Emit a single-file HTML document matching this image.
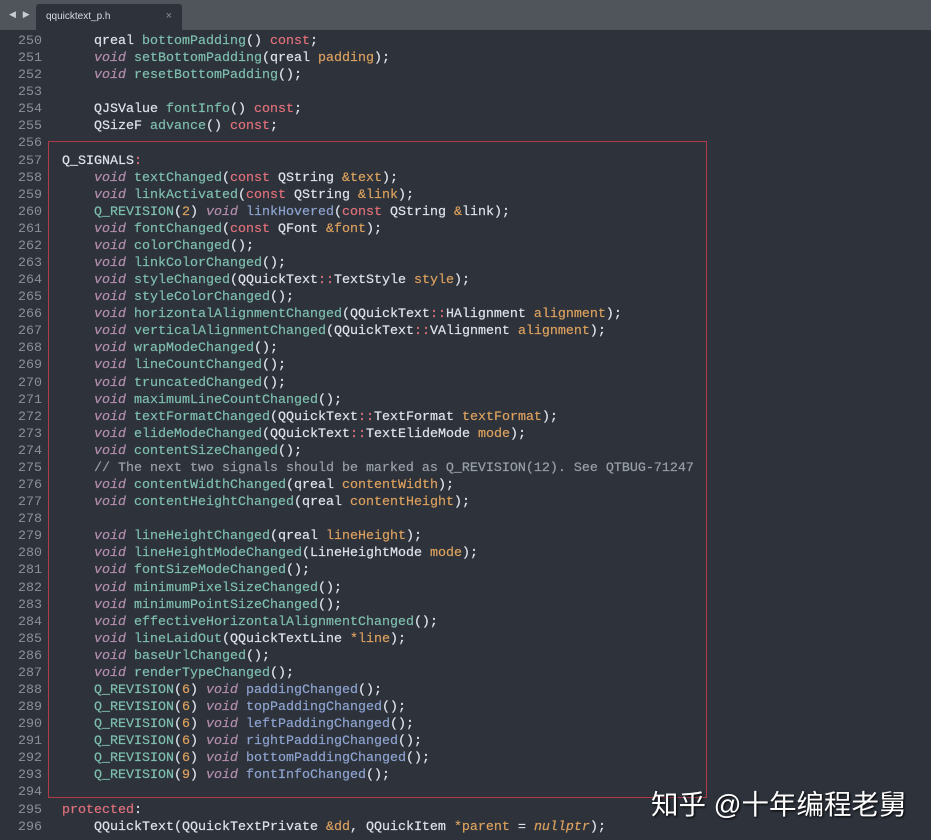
<!DOCTYPE html>
<html><head><meta charset="utf-8"><style>
body{margin:0;width:931px;height:840px;background:#2d323b;overflow:hidden;position:relative;font-family:"Liberation Mono",monospace}
.tabbar{position:absolute;left:0;top:0;width:931px;height:30px;background:#50545b}
.tab{position:absolute;left:36px;top:4px;width:146px;height:26px;background:#2d323b;border-radius:3px 3px 0 0}
.tab span{position:absolute;left:10px;top:7px;font:10px "Liberation Sans",sans-serif;color:#d8dce2}
.tab b{position:absolute;right:10px;top:6px;font:11px "Liberation Sans",sans-serif;color:#8b9099;font-weight:normal}
.arr{position:absolute;left:9px;top:10px;font:9px "DejaVu Sans",sans-serif;color:#c9ccd2;letter-spacing:2px}
.ln{position:absolute;left:0;top:33px;width:42px;text-align:right;font-size:13.33px;line-height:17.08px;color:#8b919a;white-space:pre}
.code{position:absolute;left:62px;top:33px;font-size:13.33px;line-height:17.08px;color:#dfe3ea;white-space:pre;-webkit-text-stroke:0.2px}
.k{color:#b48ead;font-style:italic}.f{color:#7fbfae}.c{color:#e0707a}.p{color:#dda15e}.n{color:#dda15e}.b{color:#8ea3cf}.m{color:#9aa0a8}
.box{position:absolute;left:48px;top:141px;width:657px;height:655px;border:1px solid #b03a48}
.wm{position:absolute;left:651px;top:782px;font:27.5px "Liberation Sans","Noto Sans CJK SC",sans-serif;color:#fff;text-shadow:1px 1px 2px #000}
</style></head><body>
<div class="tabbar"><div class="arr">◀ ▶</div><div class="tab"><span>qquicktext_p.h</span><b>×</b></div></div>
<div class="ln">250
251
252
253
254
255
256
257
258
259
260
261
262
263
264
265
266
267
268
269
270
271
272
273
274
275
276
277
278
279
280
281
282
283
284
285
286
287
288
289
290
291
292
293
294
295
296</div>
<div class="code">    qreal <span class="f">bottomPadding</span>() <span class="c">const</span>;
    <span class="k">void</span> <span class="f">setBottomPadding</span>(qreal <span class="p">padding</span>);
    <span class="k">void</span> <span class="f">resetBottomPadding</span>();

    QJSValue <span class="f">fontInfo</span>() <span class="c">const</span>;
    QSizeF <span class="f">advance</span>() <span class="c">const</span>;

Q_SIGNALS<span class="c">:</span>
    <span class="k">void</span> <span class="f">textChanged</span>(<span class="c">const</span> QString <span class="p">&amp;text</span>);
    <span class="k">void</span> <span class="f">linkActivated</span>(<span class="c">const</span> QString <span class="p">&amp;link</span>);
    <span class="f">Q_REVISION</span>(<span class="n">2</span>) <span class="k">void</span> <span class="b">linkHovered</span>(<span class="c">const</span> QString <span class="p">&amp;</span>link);
    <span class="k">void</span> <span class="f">fontChanged</span>(<span class="c">const</span> QFont <span class="p">&amp;font</span>);
    <span class="k">void</span> <span class="f">colorChanged</span>();
    <span class="k">void</span> <span class="f">linkColorChanged</span>();
    <span class="k">void</span> <span class="f">styleChanged</span>(QQuickText<span class="c">::</span>TextStyle <span class="p">style</span>);
    <span class="k">void</span> <span class="f">styleColorChanged</span>();
    <span class="k">void</span> <span class="f">horizontalAlignmentChanged</span>(QQuickText<span class="c">::</span>HAlignment <span class="p">alignment</span>);
    <span class="k">void</span> <span class="f">verticalAlignmentChanged</span>(QQuickText<span class="c">::</span>VAlignment <span class="p">alignment</span>);
    <span class="k">void</span> <span class="f">wrapModeChanged</span>();
    <span class="k">void</span> <span class="f">lineCountChanged</span>();
    <span class="k">void</span> <span class="f">truncatedChanged</span>();
    <span class="k">void</span> <span class="f">maximumLineCountChanged</span>();
    <span class="k">void</span> <span class="f">textFormatChanged</span>(QQuickText<span class="c">::</span>TextFormat <span class="p">textFormat</span>);
    <span class="k">void</span> <span class="f">elideModeChanged</span>(QQuickText<span class="c">::</span>TextElideMode <span class="p">mode</span>);
    <span class="k">void</span> <span class="f">contentSizeChanged</span>();
    <span class="m">// The next two signals should be marked as Q_REVISION(12). See QTBUG-71247</span>
    <span class="k">void</span> <span class="f">contentWidthChanged</span>(qreal <span class="p">contentWidth</span>);
    <span class="k">void</span> <span class="f">contentHeightChanged</span>(qreal <span class="p">contentHeight</span>);

    <span class="k">void</span> <span class="f">lineHeightChanged</span>(qreal <span class="p">lineHeight</span>);
    <span class="k">void</span> <span class="f">lineHeightModeChanged</span>(LineHeightMode <span class="p">mode</span>);
    <span class="k">void</span> <span class="f">fontSizeModeChanged</span>();
    <span class="k">void</span> <span class="f">minimumPixelSizeChanged</span>();
    <span class="k">void</span> <span class="f">minimumPointSizeChanged</span>();
    <span class="k">void</span> <span class="f">effectiveHorizontalAlignmentChanged</span>();
    <span class="k">void</span> <span class="f">lineLaidOut</span>(QQuickTextLine <span class="p">*line</span>);
    <span class="k">void</span> <span class="f">baseUrlChanged</span>();
    <span class="k">void</span> <span class="f">renderTypeChanged</span>();
    <span class="f">Q_REVISION</span>(<span class="n">6</span>) <span class="k">void</span> <span class="b">paddingChanged</span>();
    <span class="f">Q_REVISION</span>(<span class="n">6</span>) <span class="k">void</span> <span class="b">topPaddingChanged</span>();
    <span class="f">Q_REVISION</span>(<span class="n">6</span>) <span class="k">void</span> <span class="b">leftPaddingChanged</span>();
    <span class="f">Q_REVISION</span>(<span class="n">6</span>) <span class="k">void</span> <span class="b">rightPaddingChanged</span>();
    <span class="f">Q_REVISION</span>(<span class="n">6</span>) <span class="k">void</span> <span class="b">bottomPaddingChanged</span>();
    <span class="f">Q_REVISION</span>(<span class="n">9</span>) <span class="k">void</span> <span class="b">fontInfoChanged</span>();

<span class="c">protected</span>:
    QQuickText(QQuickTextPrivate <span class="p">&amp;dd</span>, QQuickItem <span class="p">*parent</span> = <span class="p" style="font-style:italic">nullptr</span>);</div>
<div class="box"></div>
<div class="wm">知乎 @十年编程老舅</div>
</body></html>
